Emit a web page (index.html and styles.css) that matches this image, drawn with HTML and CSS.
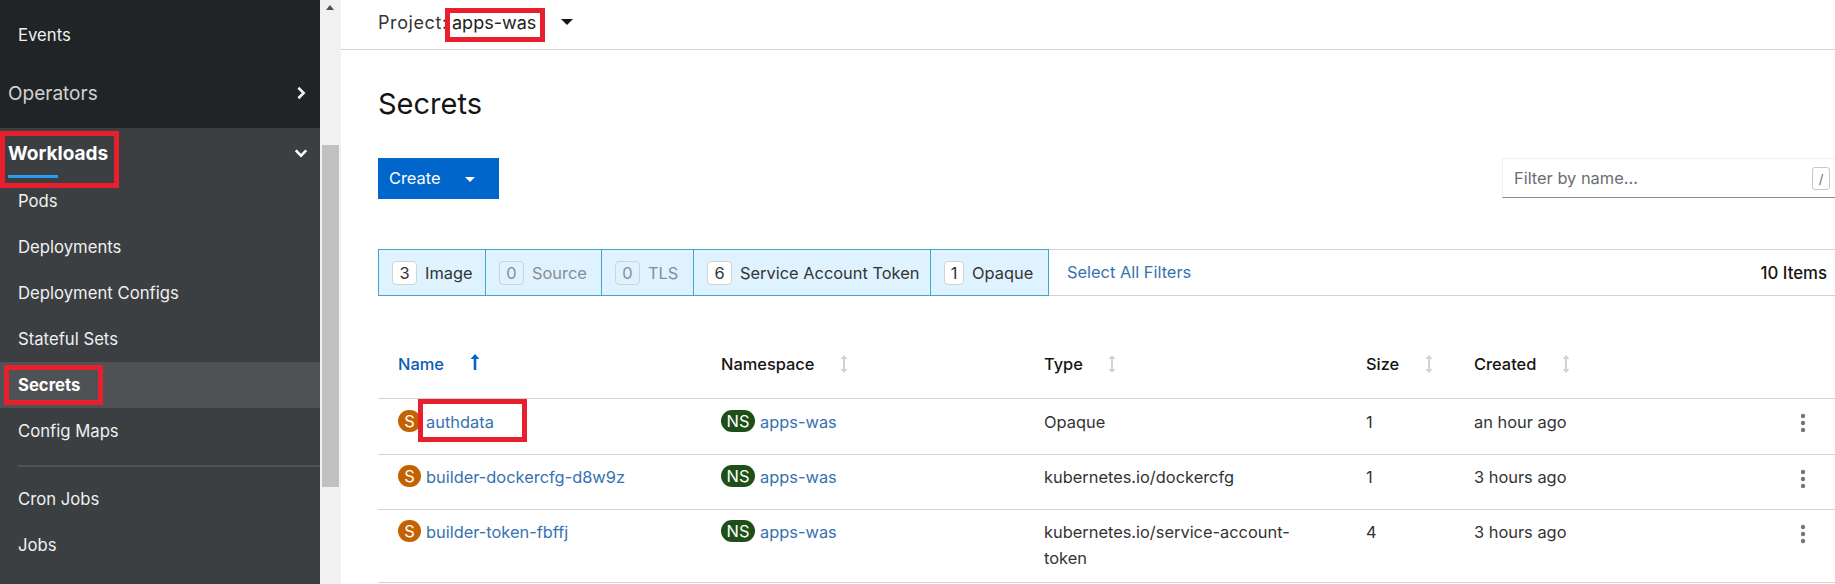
FILE: index.html
```html
<!DOCTYPE html>
<html lang="en">
<head>
    <meta charset="UTF-8">
    <meta name="viewport" content="width=device-width, initial-scale=1.0">
    <title>Secrets</title>
    <link rel="stylesheet" href="styles.css">
</head>
<body>
    <div class="app">
        <nav class="sidebar">
            <div class="nav-dark">
                <a class="nav-sub">Events</a>
                <div class="nav-group nav-group-closed">
                    <span>Operators</span>
                    <svg class="chevron" viewBox="0 0 12 16"><path d="M3 2l6 6-6 6" /></svg>
                </div>
            </div>
            <div class="nav-open">
                <div class="nav-group nav-group-open">
                    <span class="nav-title">Workloads</span>
                    <svg class="chevron" viewBox="0 0 16 12"><path d="M2 3l6 6 6-6" /></svg>
                </div>
                <a class="nav-sub">Pods</a>
                <a class="nav-sub">Deployments</a>
                <a class="nav-sub">Deployment Configs</a>
                <a class="nav-sub">Stateful Sets</a>
                <a class="nav-sub nav-active">Secrets</a>
                <a class="nav-sub">Config Maps</a>
                <div class="nav-divider"></div>
                <a class="nav-sub">Cron Jobs</a>
                <a class="nav-sub">Jobs</a>
            </div>
        </nav>

        <div class="scrollbar">
            <div class="scroll-up"></div>
            <div class="scroll-thumb"></div>
        </div>

        <main class="content">
            <div class="project-bar">
                <span class="project-label">Project:</span>
                <span class="project-name">apps-was</span>
                <span class="caret caret-dark"></span>
            </div>

            <h1 class="page-title">Secrets</h1>

            <div class="toolbar">
                <button class="create-btn">Create <span class="caret caret-white"></span></button>
                <div class="name-filter">
                    <span>Filter by name...</span>
                    <kbd class="slash-key">/</kbd>
                </div>
            </div>

            <div class="filter-row">
                <div class="filter-cell filter-image"><span class="count">3</span>Image</div>
                <div class="filter-cell filter-off filter-source"><span class="count">0</span>Source</div>
                <div class="filter-cell filter-off filter-tls"><span class="count">0</span>TLS</div>
                <div class="filter-cell filter-sa"><span class="count">6</span>Service Account Token</div>
                <div class="filter-cell filter-opaque"><span class="count count-narrow">1</span>Opaque</div>
                <a class="select-all">Select All Filters</a>
                <span class="item-count">10 Items</span>
            </div>

            <table class="secrets">
                <colgroup>
                    <col class="col-name">
                    <col class="col-ns">
                    <col class="col-type">
                    <col class="col-size">
                    <col class="col-created">
                </colgroup>
                <thead>
                    <tr>
                        <th class="sorted">Name
                            <svg class="sort sort-name" viewBox="0 0 10 16"><path d="M5 0L9.5 5H6.3V16H3.7V5H.5z" /></svg>
                        </th>
                        <th>Namespace
                            <svg class="sort" viewBox="0 0 8 18"><path d="M4 0L7.5 4H5V14H7.5L4 18 .5 14H3V4H.5z" /></svg>
                        </th>
                        <th>Type
                            <svg class="sort" viewBox="0 0 8 18"><path d="M4 0L7.5 4H5V14H7.5L4 18 .5 14H3V4H.5z" /></svg>
                        </th>
                        <th>Size
                            <svg class="sort" viewBox="0 0 8 18"><path d="M4 0L7.5 4H5V14H7.5L4 18 .5 14H3V4H.5z" /></svg>
                        </th>
                        <th>Created
                            <svg class="sort" viewBox="0 0 8 18"><path d="M4 0L7.5 4H5V14H7.5L4 18 .5 14H3V4H.5z" /></svg>
                        </th>
                    </tr>
                </thead>
                <tbody>
                    <tr class="row-a">
                        <td><span class="badge badge-s">S</span><a class="link">authdata</a></td>
                        <td><span class="badge badge-ns">NS</span><a class="link">apps-was</a></td>
                        <td>Opaque</td>
                        <td>1</td>
                        <td class="created-cell">an hour ago<svg class="kebab" viewBox="0 0 6 20"><circle cx="3" cy="3" r="2.2" /><circle cx="3" cy="10" r="2.2" /><circle cx="3" cy="17" r="2.2" /></svg></td>
                    </tr>
                    <tr class="row-b">
                        <td><span class="badge badge-s">S</span><a class="link">builder-dockercfg-d8w9z</a></td>
                        <td><span class="badge badge-ns">NS</span><a class="link">apps-was</a></td>
                        <td>kubernetes.io/dockercfg</td>
                        <td>1</td>
                        <td class="created-cell">3 hours ago<svg class="kebab" viewBox="0 0 6 20"><circle cx="3" cy="3" r="2.2" /><circle cx="3" cy="10" r="2.2" /><circle cx="3" cy="17" r="2.2" /></svg></td>
                    </tr>
                    <tr class="row-c">
                        <td><span class="badge badge-s">S</span><a class="link">builder-token-fbffj</a></td>
                        <td><span class="badge badge-ns">NS</span><a class="link">apps-was</a></td>
                        <td class="type-wrap">kubernetes.io/service-account-token</td>
                        <td>4</td>
                        <td class="created-cell">3 hours ago<svg class="kebab" viewBox="0 0 6 20"><circle cx="3" cy="3" r="2.2" /><circle cx="3" cy="10" r="2.2" /><circle cx="3" cy="17" r="2.2" /></svg></td>
                    </tr>
                </tbody>
            </table>
        </main>
    </div>

    <!-- red annotation boxes drawn over the screenshot -->
    <div class="mark mark-project"></div>
    <div class="mark mark-workloads"></div>
    <div class="mark mark-secrets"></div>
    <div class="mark mark-authdata"></div>
</body>
</html>
```

FILE: styles.css
```css
html, body {
    margin: 0;
    padding: 0;
    height: 584px;
    overflow: hidden;
    background: white;
}
body {
    position: relative;
    font-family: Inter, sans-serif;
    font-size: 16.4px;
    color: #333;
}
a {
    text-decoration: none;
}
.app {
    display: flex;
    height: 584px;
}

/* sidebar */
.sidebar {
    width: 320px;
    flex: none;
    background: #3c3f42;
    color: #f0f0f0;
    font-size: 16.7px;
}
.nav-dark {
    height: 128px;
    padding-top: 12px;
    box-sizing: border-box;
    background: #212427;
}
.nav-sub {
    display: flex;
    align-items: center;
    height: 46px;
    padding-left: 18px;
}
.nav-group {
    display: flex;
    align-items: center;
    justify-content: space-between;
    padding: 0 12px 0 8px;
    font-size: 19px;
}
.nav-group-closed {
    height: 70px;
    color: #d2d2d2;
}
.nav-group-open {
    height: 50px;
    color: white;
    font-weight: 700;
    align-items: flex-start;
    padding-top: 14px;
    box-sizing: border-box;
}
.nav-title {
    position: relative;
}
.nav-title::after {
    content: "";
    position: absolute;
    left: 0;
    top: 33px;
    width: 50px;
    height: 3px;
    background: #2b9af3;
}
.chevron {
    width: 14px;
    height: 14px;
    fill: none;
    stroke: #f0f0f0;
    stroke-width: 3;
}
.nav-group-open .chevron {
    margin-top: 4px;
    stroke: white;
}
.nav-active {
    background: #4f5255;
    color: white;
    font-weight: 700;
}
.nav-divider {
    height: 2px;
    margin: 11px 0 9px 18px;
    background: #4f5255;
}

/* scrollbar */
.scrollbar {
    width: 21px;
    flex: none;
    background: #f1f1f1;
}
.scroll-up {
    width: 0;
    margin: 5px 0 0 6px;
    border-left: 4px solid transparent;
    border-right: 4px solid transparent;
    border-bottom: 5px solid #505050;
}
.scroll-thumb {
    width: 17px;
    height: 342px;
    margin: 135px 0 0 2px;
    background: #c1c1c1;
}

/* main area */
.content {
    flex: 1;
    min-width: 0;
}
.project-bar {
    display: flex;
    align-items: center;
    height: 44px;
    padding: 0 0 5px 37px;
    border-bottom: 1px solid #d2d2d2;
    font-size: 18px;
    color: #333;
}
.project-label {
    width: 74px;
    letter-spacing: .6px;
}
.project-name {
    width: 109px;
    color: #222;
}
.caret {
    display: inline-block;
    width: 0;
    border-left: 6px solid transparent;
    border-right: 6px solid transparent;
    border-top: 6px solid #151515;
}
.caret-white {
    margin-left: 20px;
    border-left-width: 5px;
    border-right-width: 5px;
    border-top: 5px solid white;
    vertical-align: 2px;
}
.page-title {
    height: 108px;
    margin: 0;
    padding: 34px 0 0 37px;
    box-sizing: border-box;
    font-size: 29px;
    line-height: 40px;
    font-weight: 400;
    color: #151515;
}
.toolbar {
    display: flex;
    justify-content: space-between;
    height: 91px;
    padding-left: 37px;
}
.create-btn {
    width: 121px;
    height: 41px;
    padding: 0 0 2px 11px;
    border: none;
    background: #06c;
    color: white;
    font: inherit;
    text-align: left;
}
.name-filter {
    display: flex;
    align-items: center;
    justify-content: space-between;
    width: 333px;
    height: 40px;
    padding: 0 5px 0 11px;
    box-sizing: border-box;
    border: 1px solid #f0f0f0;
    border-bottom: 1px solid #8a8d90;
    border-right: none;
    color: #6a6e73;
}
.slash-key {
    width: 18px;
    height: 23px;
    line-height: 22px;
    box-sizing: border-box;
    border: 1px solid #c7c7c7;
    border-radius: 3px;
    font-family: Inter, sans-serif;
    font-size: 13px;
    text-align: center;
}
.filter-row {
    display: flex;
    align-items: center;
    height: 47px;
    margin-left: 37px;
    box-sizing: border-box;
    border-top: 1px solid #d2d2d2;
    border-bottom: 1px solid #d2d2d2;
}
.filter-cell {
    display: flex;
    align-items: center;
    height: 47px;
    margin: 0 0 0 -1px;
    box-sizing: border-box;
    padding-left: 13px;
    border: 1px solid #46a6c6;
    background: #def3ff;
    color: #333;
}
.filter-cell:first-child {
    margin-left: 0;
}
.filter-image { width: 108px; }
.filter-source { width: 117px; }
.filter-tls { width: 93px; }
.filter-sa { width: 238px; }
.filter-opaque { width: 119px; }
.filter-off {
    color: #8a8d90;
}
.count {
    min-width: 25px;
    height: 24px;
    line-height: 22px;
    margin-right: 8px;
    box-sizing: border-box;
    border: 1px solid #d2d2d2;
    border-radius: 4px;
    background: white;
    text-align: center;
}
.count-narrow {
    min-width: 20px;
}
.filter-off .count {
    background: transparent;
}
.select-all {
    margin: 0 0 2px 18px;
    color: #3572b0;
}
.item-count {
    margin-left: auto;
    padding-right: 8px;
    font-size: 16.8px;
    font-weight: 500;
    color: #151515;
}

/* table */
.secrets {
    width: 1457px;
    margin-left: 37px;
    table-layout: fixed;
    border-collapse: collapse;
}
.col-name { width: 343px; }
.col-ns { width: 323px; }
.col-type { width: 322px; }
.col-size { width: 108px; }
.secrets th {
    height: 102px;
    padding: 35px 0 0;
    box-sizing: border-box;
    border-bottom: 1px solid #d2d2d2;
    text-align: left;
    font-weight: 500;
    color: #151515;
}
.secrets th:first-child,
.secrets td:first-child {
    padding-left: 20px;
}
.secrets .sorted {
    color: #0b5cb5;
}
.sort {
    display: inline-block;
    height: 18px;
    width: 8px;
    margin-left: 21px;
    vertical-align: -3px;
    fill: #d2d2d2;
}
.secrets .sort-name {
    width: 10px;
    height: 16px;
    margin-left: 22px;
    fill: #06c;
    vertical-align: 0;
}
.secrets td {
    padding: 0;
    border-bottom: 1px solid #d2d2d2;
    vertical-align: top;
    line-height: 26px;
    color: #333;
}
.secrets .row-a td { height: 56px; padding-top: 10px; box-sizing: border-box; }
.secrets .row-b td { height: 55px; padding-top: 9px; box-sizing: border-box; }
.secrets .row-c td { height: 73px; padding-top: 9px; box-sizing: border-box; }
.secrets .type-wrap {
    padding-right: 50px;
}
.badge {
    display: inline-block;
    height: 22px;
    line-height: 22px;
    margin-right: 5px;
    border-radius: 11px;
    color: white;
    text-align: center;
    vertical-align: 1px;
}
.badge-s {
    width: 23px;
    background: #c46100;
}
.badge-ns {
    width: 34px;
    background: #1e4f18;
}
.link {
    color: #3572b0;
}
.created-cell {
    position: relative;
}
.kebab {
    position: absolute;
    left: 326px;
    top: 14px;
    width: 6px;
    height: 20px;
    fill: #72767b;
}

/* red annotation boxes */
.mark {
    position: absolute;
    box-sizing: border-box;
    border: 5px solid #e81f2d;
}
.mark-project { left: 445px; top: 8px; width: 100px; height: 34px; }
.mark-workloads { left: 0; top: 131px; width: 119px; height: 57px; }
.mark-secrets { left: 4px; top: 365px; width: 99px; height: 40px; }
.mark-authdata { left: 418px; top: 399px; width: 109px; height: 43px; }
```
